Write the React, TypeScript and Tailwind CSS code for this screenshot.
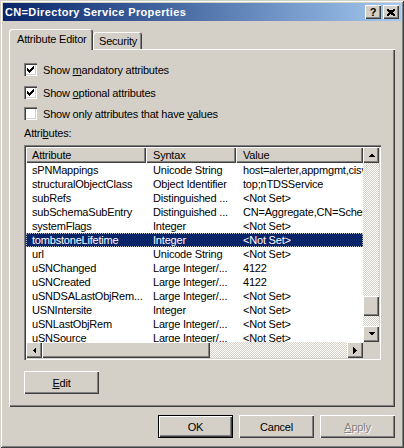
import React from "react";

const raised =
  "shadow-[inset_1px_1px_0_#ffffff,inset_-1px_-1px_0_#404040,inset_-2px_-2px_0_#808080]";
const checker =
  "bg-[repeating-conic-gradient(#d4d0c8_0%_25%,#ffffff_0%_50%)] bg-[length:2px_2px]";

interface Row {
  attr: string;
  syntax: string;
  value: string;
}

const rows: Row[] = [
  { attr: "sPNMappings", syntax: "Unicode String", value: "host=alerter,appmgmt,cisvc,clipsrv" },
  { attr: "structuralObjectClass", syntax: "Object Identifier", value: "top;nTDSService" },
  { attr: "subRefs", syntax: "Distinguished ...", value: "<Not Set>" },
  { attr: "subSchemaSubEntry", syntax: "Distinguished ...", value: "CN=Aggregate,CN=Schema,CN=Configuration" },
  { attr: "systemFlags", syntax: "Integer", value: "<Not Set>" },
  { attr: "tombstoneLifetime", syntax: "Integer", value: "<Not Set>" },
  { attr: "url", syntax: "Unicode String", value: "<Not Set>" },
  { attr: "uSNChanged", syntax: "Large Integer/...", value: "4122" },
  { attr: "uSNCreated", syntax: "Large Integer/...", value: "4122" },
  { attr: "uSNDSALastObjRem...", syntax: "Large Integer/...", value: "<Not Set>" },
  { attr: "USNIntersite", syntax: "Integer", value: "<Not Set>" },
  { attr: "uSNLastObjRem", syntax: "Large Integer/...", value: "<Not Set>" },
  { attr: "uSNSource", syntax: "Large Integer/...", value: "<Not Set>" },
];

const Arrow = ({ dir }: { dir: "up" | "down" | "left" | "right" }) => {
  const pts = {
    up: "0,4 7,4 3.5,0.5",
    down: "0,0 7,0 3.5,3.5",
    left: "4,0 4,7 0.5,3.5",
    right: "0,0 0,7 3.5,3.5",
  }[dir];
  const vert = dir === "up" || dir === "down";
  return (
    <svg width={vert ? 7 : 4} height={vert ? 4 : 7} shapeRendering="crispEdges">
      <polygon points={pts} fill="#000" />
    </svg>
  );
};

const ScrollBtn = ({ dir }: { dir: "up" | "down" | "left" | "right" }) => (
  <div className={`w-[16px] h-[16px] shrink-0 bg-[#d4d0c8] flex items-center justify-center ${raised}`}>
    <Arrow dir={dir} />
  </div>
);

const Checkbox = ({ checked }: { checked: boolean }) => (
  <div className="w-[13px] h-[13px] bg-white shrink-0 flex items-center justify-center shadow-[inset_1px_1px_0_#808080,inset_2px_2px_0_#404040,inset_-1px_-1px_0_#ffffff,inset_-2px_-2px_0_#d4d0c8]">
    {checked && (
      <svg width="7" height="7" shapeRendering="crispEdges">
        <path
          d="M0.5 2v3M1.5 3v3M2.5 4v3M3.5 3v3M4.5 2v3M5.5 1v3M6.5 0v3"
          stroke="#000"
          strokeWidth="1"
        />
      </svg>
    )}
  </div>
);

const Button = ({
  children,
  isDefault,
  disabled,
}: {
  children: React.ReactNode;
  isDefault?: boolean;
  disabled?: boolean;
}) => (
  <div
    className={`w-[75px] h-[23px] bg-[#d4d0c8] flex items-center justify-center ${
      isDefault
        ? "shadow-[inset_0_0_0_1px_#000000,inset_2px_2px_0_#ffffff,inset_-2px_-2px_0_#404040,inset_-3px_-3px_0_#808080]"
        : raised
    } ${disabled ? "text-[#808080] [text-shadow:1px_1px_0_#ffffff]" : "text-black"}`}
  >
    {children}
  </div>
);

export default function App() {
  return (
    <div className="w-[404px] h-[448px] bg-[#d4d0c8] p-[3px] flex flex-col font-['Liberation_Sans',Arial,sans-serif] text-[11px] leading-[14px] tracking-[-0.2px] text-black shadow-[inset_1px_1px_0_#d4d0c8,inset_-1px_-1px_0_#404040,inset_2px_2px_0_#ffffff,inset_-2px_-2px_0_#808080]">
      {/* title bar */}
      <div className="h-[18px] flex items-center pl-[2px] pr-[2px] bg-linear-to-r from-[#0a246a] to-[#a6caf0]">
        <span className="text-white font-bold flex-1 tracking-[0.35px]">CN=Directory Service Properties</span>
        <div className="flex gap-[2px]">
          <div className={`w-[16px] h-[14px] bg-[#d4d0c8] flex items-center justify-center font-bold text-[11px] leading-none ${raised}`}>
            ?
          </div>
          <div className={`w-[16px] h-[14px] bg-[#d4d0c8] flex items-center justify-center ${raised}`}>
            <svg width="8" height="7" shapeRendering="crispEdges">
              <path d="M0 0L8 7M1 0L8 6M0 1L7 7M8 0L0 7M7 0L0 6M8 1L1 7" stroke="#000" strokeWidth="1" />
            </svg>
          </div>
        </div>
      </div>

      {/* tabs */}
      <div className="mt-[8px] px-[6px]">
        <div className="flex items-end h-[20px]">
          <div className="relative z-10 self-start w-[84px] h-[21px] bg-[#d4d0c8] rounded-t-[3px] pt-[3px] pl-[8px] shadow-[inset_1px_1px_0_#ffffff,inset_-1px_0_0_#404040,inset_-2px_0_0_#808080]">
            Attribute Editor
          </div>
          <div className="w-[49px] h-[17px] bg-[#d4d0c8] rounded-t-[3px] pt-[2px] pl-[6px] shadow-[inset_1px_1px_0_#ffffff,inset_-1px_0_0_#404040,inset_-2px_0_0_#808080]">
            Security
          </div>
        </div>

        {/* panel */}
        <div className="w-[386px] h-[358px] pl-[15px] pt-[14px] shadow-[inset_1px_1px_0_#ffffff,inset_-1px_-1px_0_#404040,inset_-2px_-2px_0_#808080]">
          <div className="flex items-center h-[13px]">
            <Checkbox checked />
            <span className="ml-[6px]">
              Show <u>m</u>andatory attributes
            </span>
          </div>
          <div className="flex items-center h-[13px] mt-[10px]">
            <Checkbox checked />
            <span className="ml-[6px]">
              Show <u>o</u>ptional attributes
            </span>
          </div>
          <div className="flex items-center h-[13px] mt-[8px]">
            <Checkbox checked={false} />
            <span className="ml-[6px]">
              Show only attributes that have <u>v</u>alues
            </span>
          </div>
          <div className="mt-[6px] h-[14px]">
            Attri<u>b</u>utes:
          </div>

          {/* list */}
          <div className="mt-[5px] w-[357px] h-[215px] p-[2px] bg-white flex shadow-[inset_1px_1px_0_#808080,inset_2px_2px_0_#404040,inset_-1px_-1px_0_#ffffff,inset_-2px_-2px_0_#d4d0c8]">
            <div className="w-[337px] flex flex-col">
              <div className="h-[16px] flex shrink-0">
                <div className={`w-[120px] bg-[#d4d0c8] pl-[6px] pt-[1px] ${raised}`}>Attribute</div>
                <div className={`w-[90px] bg-[#d4d0c8] pl-[7px] pt-[1px] ${raised}`}>Syntax</div>
                <div className={`flex-1 bg-[#d4d0c8] pl-[7px] pt-[1px] ${raised}`}>Value</div>
              </div>
              <div className="flex-1 overflow-hidden">
                {rows.map((r) => {
                  const sel = r.attr === "tombstoneLifetime";
                  return (
                    <div
                      key={r.attr}
                      className={`h-[14px] flex whitespace-nowrap ${
                        sel
                          ? "bg-[#0a246a] text-white outline-1 outline-dotted outline-[#c0c0c0] -outline-offset-1"
                          : ""
                      }`}
                    >
                      <div className="w-[120px] pl-[6px] overflow-hidden">{r.attr}</div>
                      <div className="w-[90px] pl-[7px] overflow-hidden">{r.syntax}</div>
                      <div className="flex-1 pl-[7px] overflow-hidden">{r.value}</div>
                    </div>
                  );
                })}
              </div>
              <div className="h-[16px] flex shrink-0">
                <ScrollBtn dir="left" />
                <div className={`w-[168px] bg-[#d4d0c8] ${raised}`} />
                <div className={`flex-1 ${checker}`} />
                <ScrollBtn dir="right" />
              </div>
            </div>
            <div className="w-[16px] flex flex-col">
              <ScrollBtn dir="up" />
              <div className={`h-[133px] ${checker}`} />
              <div className={`h-[20px] bg-[#d4d0c8] ${raised}`} />
              <div className={`h-[10px] ${checker}`} />
              <ScrollBtn dir="down" />
              <div className="h-[16px] bg-[#d4d0c8]" />
            </div>
          </div>

          <div className="mt-[11px]">
            <Button>
              <span>
                <u>E</u>dit
              </span>
            </Button>
          </div>
        </div>

        {/* dialog buttons */}
        <div className="mt-[8px] flex justify-end gap-[6px]">
          <Button isDefault>OK</Button>
          <Button>Cancel</Button>
          <Button disabled>
            <span>
              <u>A</u>pply
            </span>
          </Button>
        </div>
      </div>
    </div>
  );
}
